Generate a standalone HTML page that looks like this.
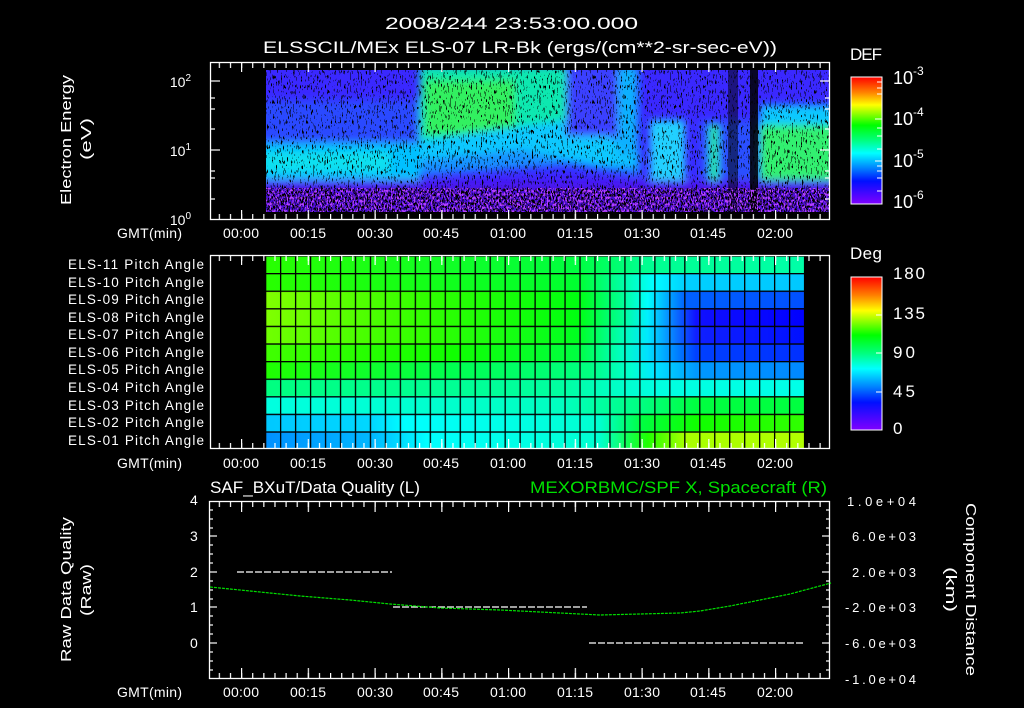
<!DOCTYPE html>
<html><head><meta charset="utf-8"><style>
html,body{margin:0;padding:0;background:#000;}
svg{display:block;}
text{font-family:"Liberation Sans",sans-serif;fill:#fff;}
</style></head><body>
<svg width="1024" height="708" viewBox="0 0 1024 708" xmlns="http://www.w3.org/2000/svg">
<defs>
<linearGradient id="cb1" x1="0" y1="0" x2="0" y2="1">
<stop offset="0" stop-color="#ff0000"/><stop offset="0.12" stop-color="#ff8000"/><stop offset="0.22" stop-color="#ffff00"/><stop offset="0.38" stop-color="#00ff00"/><stop offset="0.5" stop-color="#00ff80"/><stop offset="0.6" stop-color="#00ffff"/><stop offset="0.72" stop-color="#0080ff"/><stop offset="0.82" stop-color="#0010ff"/><stop offset="1" stop-color="#8000ff"/>
</linearGradient>
<filter id="bl" filterUnits="userSpaceOnUse" x="200" y="50" width="650" height="180"><feGaussianBlur stdDeviation="4"/></filter>
<filter id="sp" x="0" y="0" width="100%" height="100%"><feTurbulence type="fractalNoise" baseFrequency="0.8 0.2" numOctaves="2" seed="3"/><feColorMatrix type="matrix" values="0 0 0 0 0  0 0 0 0 0  0 0 0 0 0  -20 0 0 0 7.4"/></filter>
<filter id="sp2" x="0" y="0" width="100%" height="100%"><feTurbulence type="fractalNoise" baseFrequency="0.7 0.35" numOctaves="2" seed="7"/><feColorMatrix type="matrix" values="0 0 0 0 0  0 0 0 0 0  0 0 0 0 0  -20 0 0 0 10"/></filter>
<filter id="sp3" x="0" y="0" width="100%" height="100%"><feTurbulence type="fractalNoise" baseFrequency="0.7 0.3" numOctaves="2" seed="11"/><feColorMatrix type="matrix" values="0 0 0 0 0.45  0 0 0 0 0.05  0 0 0 0 1  20 0 0 0 -11"/></filter>
<pattern id="tkm" x="241" y="0" width="11.125" height="708" patternUnits="userSpaceOnUse"><rect x="0" y="0" width="1.2" height="708" fill="#fff"/></pattern>
<pattern id="tkM" x="241" y="0" width="66.75" height="708" patternUnits="userSpaceOnUse"><rect x="0" y="0" width="1.2" height="708" fill="#fff"/></pattern>
<pattern id="gv" x="265" y="0" width="14.97" height="708" patternUnits="userSpaceOnUse"><rect x="0" y="0" width="1.3" height="708" fill="#000"/></pattern>
<pattern id="gh" x="0" y="255.4" width="1024" height="17.6" patternUnits="userSpaceOnUse"><rect x="0" y="0" width="1024" height="1.3" fill="#000"/></pattern>
<clipPath id="c1"><rect x="266" y="70" width="563" height="142"/></clipPath>
</defs>

<text x="385" y="29" font-size="17" textLength="253" lengthAdjust="spacingAndGlyphs">2008/244 23:53:00.000</text>
<text x="263" y="53" font-size="17" textLength="514" lengthAdjust="spacingAndGlyphs">ELSSCIL/MEx ELS-07 LR-Bk  (ergs/(cm**2-sr-sec-eV))</text>

<g clip-path="url(#c1)">
<rect x="266" y="70" width="563" height="142" fill="#3a28ff"/>
<g filter="url(#bl)">
<rect x="260" y="100" width="160" height="45" fill="#2a48ff"/>
<rect x="260" y="143" width="160" height="37" fill="#00c0ff"/>
<rect x="260" y="152" width="130" height="20" fill="#10e0f0"/>
<rect x="420" y="66" width="148" height="90" fill="#10e8b0"/>
<rect x="425" y="80" width="90" height="55" fill="#30f060"/>
<polygon points="420,150 566,135 640,150 640,175 566,165 420,175" fill="#1890ff"/>
<polygon points="420,140 566,120 620,140 640,165 600,165 520,150 420,160" fill="#10c8ff"/>
<rect x="566" y="66" width="60" height="70" fill="#3a40ff"/>
<rect x="618" y="66" width="20" height="90" fill="#10b0ff"/>
<rect x="650" y="120" width="35" height="62" fill="#20d0ff"/>
<rect x="700" y="120" width="60" height="62" fill="#2a50ff"/>
<rect x="710" y="125" width="8" height="55" fill="#20f090"/>
<rect x="760" y="105" width="75" height="25" fill="#10c8ff"/>
<rect x="760" y="125" width="75" height="60" fill="#30f070"/>
<rect x="260" y="180" width="580" height="12" fill="#4a18f0"/>
<rect x="260" y="190" width="580" height="30" fill="#4a10d8"/>
</g>
<rect x="728" y="70" width="10" height="142" fill="#000" opacity="0.5"/>
<rect x="750" y="70" width="8" height="142" fill="#000" opacity="0.85"/>
<rect x="266" y="70" width="563" height="142" filter="url(#sp)"/>
<rect x="266" y="188" width="563" height="24" filter="url(#sp2)"/>
<rect x="266" y="188" width="563" height="24" filter="url(#sp3)"/>
</g>
<rect x="210.5" y="62.5" width="619" height="157" fill="none" stroke="#fff" stroke-width="1.3"/>
<rect x="210" y="63" width="620" height="5" fill="url(#tkm)"/>
<rect x="210" y="63" width="620" height="9" fill="url(#tkM)"/>
<rect x="210" y="214" width="620" height="5" fill="url(#tkm)"/>
<rect x="210" y="210" width="620" height="9" fill="url(#tkM)"/>
<g stroke="#fff" stroke-width="1.2">
<line x1="210" y1="81" x2="220" y2="81"/><line x1="210" y1="150" x2="220" y2="150"/>
<line x1="210" y1="98" x2="215" y2="98"/><line x1="210" y1="109" x2="215" y2="109"/><line x1="210" y1="129" x2="215" y2="129"/><line x1="210" y1="171" x2="215" y2="171"/><line x1="210" y1="178" x2="215" y2="178"/><line x1="210" y1="199" x2="215" y2="199"/>
<line x1="820" y1="81" x2="830" y2="81"/><line x1="820" y1="150" x2="830" y2="150"/>
<line x1="825" y1="98" x2="830" y2="98"/><line x1="825" y1="109" x2="830" y2="109"/><line x1="825" y1="129" x2="830" y2="129"/><line x1="825" y1="171" x2="830" y2="171"/><line x1="825" y1="178" x2="830" y2="178"/><line x1="825" y1="199" x2="830" y2="199"/>
</g>
<text x="191" y="87" font-size="14" text-anchor="end">10<tspan font-size="10" dy="-6">2</tspan></text>
<text x="191" y="156" font-size="14" text-anchor="end">10<tspan font-size="10" dy="-6">1</tspan></text>
<text x="191" y="225" font-size="14" text-anchor="end">10<tspan font-size="10" dy="-6">0</tspan></text>
<text transform="translate(71,205) rotate(-90)" font-size="15" textLength="130" lengthAdjust="spacingAndGlyphs">Electron Energy</text>
<text transform="translate(91,160) rotate(-90)" font-size="15" textLength="42" lengthAdjust="spacingAndGlyphs">(eV)</text>

<g font-size="14">
<text x="223" y="238" textLength="36">00:00</text><text x="290" y="238" textLength="36">00:15</text><text x="357" y="238" textLength="36">00:30</text><text x="423" y="238" textLength="36">00:45</text><text x="490" y="238" textLength="36">01:00</text><text x="557" y="238" textLength="36">01:15</text><text x="624" y="238" textLength="36">01:30</text><text x="690" y="238" textLength="36">01:45</text><text x="757" y="238" textLength="36">02:00</text>
<text x="223" y="468" textLength="36">00:00</text><text x="290" y="468" textLength="36">00:15</text><text x="357" y="468" textLength="36">00:30</text><text x="423" y="468" textLength="36">00:45</text><text x="490" y="468" textLength="36">01:00</text><text x="557" y="468" textLength="36">01:15</text><text x="624" y="468" textLength="36">01:30</text><text x="690" y="468" textLength="36">01:45</text><text x="757" y="468" textLength="36">02:00</text>
<text x="223" y="697" textLength="36">00:00</text><text x="290" y="697" textLength="36">00:15</text><text x="357" y="697" textLength="36">00:30</text><text x="423" y="697" textLength="36">00:45</text><text x="490" y="697" textLength="36">01:00</text><text x="557" y="697" textLength="36">01:15</text><text x="624" y="697" textLength="36">01:30</text><text x="690" y="697" textLength="36">01:45</text><text x="757" y="697" textLength="36">02:00</text>
<text x="117" y="238" textLength="65">GMT(min)</text><text x="117" y="468" textLength="65">GMT(min)</text><text x="117" y="697" textLength="65">GMT(min)</text>
</g>

<text x="850" y="60" font-size="17" textLength="32">DEF</text>
<rect x="851" y="77" width="31" height="127" fill="url(#cb1)" stroke="#fff" stroke-width="1"/>
<g stroke="#fff" stroke-width="1"><line x1="877" y1="82" x2="882" y2="82"/><line x1="877" y1="88" x2="882" y2="88"/><line x1="877" y1="94" x2="882" y2="94"/><line x1="875" y1="119" x2="882" y2="119"/><line x1="877" y1="128" x2="882" y2="128"/><line x1="877" y1="136" x2="882" y2="136"/><line x1="877" y1="149" x2="882" y2="149"/><line x1="875" y1="161" x2="882" y2="161"/><line x1="877" y1="166" x2="882" y2="166"/><line x1="877" y1="171" x2="882" y2="171"/><line x1="877" y1="178" x2="882" y2="178"/><line x1="877" y1="191" x2="882" y2="191"/></g>
<g font-size="18"><text x="893" y="84">10<tspan font-size="12" dy="-9">-3</tspan></text><text x="893" y="125">10<tspan font-size="12" dy="-9">-4</tspan></text><text x="893" y="167">10<tspan font-size="12" dy="-9">-5</tspan></text><text x="893" y="208">10<tspan font-size="12" dy="-9">-6</tspan></text></g>

<g>
<linearGradient id="r1"><stop offset="0" stop-color="#28ff00"/><stop offset="0.58" stop-color="#00ff40"/><stop offset="0.7" stop-color="#00ff90"/><stop offset="1" stop-color="#00ffa8"/></linearGradient>
<linearGradient id="r2"><stop offset="0" stop-color="#28ff00"/><stop offset="0.58" stop-color="#00ff30"/><stop offset="0.66" stop-color="#00ffa0"/><stop offset="0.72" stop-color="#00ffff"/><stop offset="0.78" stop-color="#00d0ff"/><stop offset="1" stop-color="#00c8ff"/></linearGradient>
<linearGradient id="r3"><stop offset="0" stop-color="#80ff00"/><stop offset="0.3" stop-color="#30ff00"/><stop offset="0.58" stop-color="#00ff10"/><stop offset="0.66" stop-color="#00ff90"/><stop offset="0.71" stop-color="#00ffff"/><stop offset="0.78" stop-color="#0060ff"/><stop offset="1" stop-color="#0050ff"/></linearGradient>
<linearGradient id="r4"><stop offset="0" stop-color="#80ff00"/><stop offset="0.3" stop-color="#30ff00"/><stop offset="0.58" stop-color="#00ff10"/><stop offset="0.66" stop-color="#00ff90"/><stop offset="0.71" stop-color="#00f0ff"/><stop offset="0.8" stop-color="#1010ff"/><stop offset="1" stop-color="#0000ff"/></linearGradient>
<linearGradient id="r5"><stop offset="0" stop-color="#70ff00"/><stop offset="0.3" stop-color="#30ff00"/><stop offset="0.58" stop-color="#00ff20"/><stop offset="0.66" stop-color="#00ffb0"/><stop offset="0.71" stop-color="#00e8ff"/><stop offset="0.8" stop-color="#1020ff"/><stop offset="1" stop-color="#0010ff"/></linearGradient>
<linearGradient id="r6"><stop offset="0" stop-color="#40ff00"/><stop offset="0.35" stop-color="#10ff00"/><stop offset="0.58" stop-color="#00ff40"/><stop offset="0.66" stop-color="#00ffc0"/><stop offset="0.71" stop-color="#00e0ff"/><stop offset="0.8" stop-color="#0040ff"/><stop offset="1" stop-color="#0030ff"/></linearGradient>
<linearGradient id="r7"><stop offset="0" stop-color="#20ff00"/><stop offset="0.35" stop-color="#00ff50"/><stop offset="0.6" stop-color="#00ff80"/><stop offset="0.68" stop-color="#00ffd0"/><stop offset="0.72" stop-color="#00e8ff"/><stop offset="0.8" stop-color="#0098ff"/><stop offset="1" stop-color="#0088ff"/></linearGradient>
<linearGradient id="r8"><stop offset="0" stop-color="#00ff80"/><stop offset="0.55" stop-color="#00ffa0"/><stop offset="0.72" stop-color="#00ffe0"/><stop offset="1" stop-color="#00ffe8"/></linearGradient>
<linearGradient id="r9"><stop offset="0" stop-color="#00ffe0"/><stop offset="0.55" stop-color="#00ffc0"/><stop offset="0.7" stop-color="#00ff80"/><stop offset="0.8" stop-color="#00ff40"/><stop offset="1" stop-color="#00ff40"/></linearGradient>
<linearGradient id="r10"><stop offset="0" stop-color="#00c8ff"/><stop offset="0.2" stop-color="#00d8ff"/><stop offset="0.26" stop-color="#00ffff"/><stop offset="0.62" stop-color="#00ffd0"/><stop offset="0.7" stop-color="#00ff40"/><stop offset="0.8" stop-color="#10ff00"/><stop offset="1" stop-color="#30ff00"/></linearGradient>
<linearGradient id="r11"><stop offset="0" stop-color="#0090ff"/><stop offset="0.2" stop-color="#00b8ff"/><stop offset="0.3" stop-color="#00ffff"/><stop offset="0.62" stop-color="#00ffd0"/><stop offset="0.71" stop-color="#20ff00"/><stop offset="0.78" stop-color="#a8ff00"/><stop offset="1" stop-color="#b0ff00"/></linearGradient>
<rect x="265" y="255.4" width="539" height="17.6" fill="url(#r1)"/>
<rect x="265" y="273" width="539" height="17.6" fill="url(#r2)"/>
<rect x="265" y="290.6" width="539" height="17.6" fill="url(#r3)"/>
<rect x="265" y="308.2" width="539" height="17.6" fill="url(#r4)"/>
<rect x="265" y="325.8" width="539" height="17.6" fill="url(#r5)"/>
<rect x="265" y="343.4" width="539" height="17.6" fill="url(#r6)"/>
<rect x="265" y="361" width="539" height="17.6" fill="url(#r7)"/>
<rect x="265" y="378.6" width="539" height="17.6" fill="url(#r8)"/>
<rect x="265" y="396.2" width="539" height="17.6" fill="url(#r9)"/>
<rect x="265" y="413.8" width="539" height="17.6" fill="url(#r10)"/>
<rect x="265" y="431.4" width="539" height="17.6" fill="url(#r11)"/>
<rect x="265" y="255" width="540" height="194" fill="url(#gv)"/>
<rect x="265" y="255" width="540" height="194" fill="url(#gh)"/>
</g>
<rect x="210.5" y="255.5" width="619" height="193" fill="none" stroke="#fff" stroke-width="1.3"/>
<rect x="210" y="256" width="620" height="5" fill="url(#tkm)"/>
<rect x="210" y="256" width="620" height="9" fill="url(#tkM)"/>
<rect x="210" y="443" width="620" height="5" fill="url(#tkm)"/>
<rect x="210" y="439" width="620" height="9" fill="url(#tkM)"/>
<g font-size="13.5">
<text x="68" y="269" textLength="136">ELS-11 Pitch Angle</text><text x="68" y="287" textLength="136">ELS-10 Pitch Angle</text><text x="68" y="304" textLength="136">ELS-09 Pitch Angle</text><text x="68" y="322" textLength="136">ELS-08 Pitch Angle</text><text x="68" y="339" textLength="136">ELS-07 Pitch Angle</text><text x="68" y="357" textLength="136">ELS-06 Pitch Angle</text><text x="68" y="374" textLength="136">ELS-05 Pitch Angle</text><text x="68" y="392" textLength="136">ELS-04 Pitch Angle</text><text x="68" y="410" textLength="136">ELS-03 Pitch Angle</text><text x="68" y="427" textLength="136">ELS-02 Pitch Angle</text><text x="68" y="445" textLength="136">ELS-01 Pitch Angle</text>
</g>
<text x="850" y="259" font-size="17" textLength="32">Deg</text>
<rect x="851" y="277" width="31" height="153" fill="url(#cb1)" stroke="#fff" stroke-width="1"/>
<g stroke="#fff" stroke-width="1"><line x1="876" y1="315" x2="882" y2="315"/><line x1="876" y1="353" x2="882" y2="353"/><line x1="876" y1="392" x2="882" y2="392"/></g>
<g font-size="17"><text x="893" y="279" textLength="32">180</text><text x="893" y="319" textLength="32">135</text><text x="893" y="358" textLength="22">90</text><text x="893" y="397" textLength="22">45</text><text x="893" y="434">0</text></g>

<text x="210" y="493" font-size="17" textLength="210" lengthAdjust="spacingAndGlyphs">SAF_BXuT/Data Quality (L)</text>
<text x="530" y="493" font-size="17" textLength="297" lengthAdjust="spacingAndGlyphs" style="fill:#00e000">MEXORBMC/SPF X, Spacecraft (R)</text>
<rect x="209.5" y="501.5" width="620" height="177" fill="none" stroke="#fff" stroke-width="1.3"/>
<rect x="210" y="502" width="620" height="5" fill="url(#tkm)"/>
<rect x="210" y="502" width="620" height="10" fill="url(#tkM)"/>
<rect x="210" y="673" width="620" height="5" fill="url(#tkm)"/>
<rect x="210" y="668" width="620" height="10" fill="url(#tkM)"/>
<g stroke="#fff" stroke-width="1.2">
<line x1="209" y1="536" x2="217" y2="536"/><line x1="209" y1="572" x2="217" y2="572"/><line x1="209" y1="607" x2="217" y2="607"/><line x1="209" y1="643" x2="217" y2="643"/>
<line x1="209" y1="510" x2="213" y2="510"/><line x1="209" y1="519" x2="213" y2="519"/><line x1="209" y1="528" x2="213" y2="528"/><line x1="209" y1="545" x2="213" y2="545"/><line x1="209" y1="554" x2="213" y2="554"/><line x1="209" y1="563" x2="213" y2="563"/><line x1="209" y1="581" x2="213" y2="581"/><line x1="209" y1="590" x2="213" y2="590"/><line x1="209" y1="599" x2="213" y2="599"/><line x1="209" y1="616" x2="213" y2="616"/><line x1="209" y1="625" x2="213" y2="625"/><line x1="209" y1="634" x2="213" y2="634"/><line x1="209" y1="652" x2="213" y2="652"/><line x1="209" y1="661" x2="213" y2="661"/><line x1="209" y1="670" x2="213" y2="670"/>
<line x1="822" y1="536" x2="830" y2="536"/><line x1="822" y1="572" x2="830" y2="572"/><line x1="822" y1="607" x2="830" y2="607"/><line x1="822" y1="643" x2="830" y2="643"/>
<line x1="826" y1="510" x2="830" y2="510"/><line x1="826" y1="519" x2="830" y2="519"/><line x1="826" y1="528" x2="830" y2="528"/><line x1="826" y1="545" x2="830" y2="545"/><line x1="826" y1="554" x2="830" y2="554"/><line x1="826" y1="563" x2="830" y2="563"/><line x1="826" y1="581" x2="830" y2="581"/><line x1="826" y1="590" x2="830" y2="590"/><line x1="826" y1="599" x2="830" y2="599"/><line x1="826" y1="616" x2="830" y2="616"/><line x1="826" y1="625" x2="830" y2="625"/><line x1="826" y1="634" x2="830" y2="634"/><line x1="826" y1="652" x2="830" y2="652"/><line x1="826" y1="661" x2="830" y2="661"/><line x1="826" y1="670" x2="830" y2="670"/>
</g>
<g stroke="#fff" stroke-width="1.2" stroke-dasharray="7,2">
<line x1="237" y1="572" x2="392" y2="572"/><line x1="393" y1="607" x2="587" y2="607"/><line x1="589" y1="643" x2="804" y2="643"/>
</g>
<path d="M210,587 L250,591 L300,596 L350,600 L390,604 L440,608 L500,610 L560,613 L600,615 L640,614 L680,613 L700,611 L730,606 L760,600 L790,594 L831,583" fill="none" stroke="#00e000" stroke-width="1.2" stroke-dasharray="3,1"/>
<g font-size="14"><text x="190" y="505">4</text><text x="190" y="541">3</text><text x="190" y="577">2</text><text x="190" y="612">1</text><text x="190" y="648">0</text></g>
<text transform="translate(71,662) rotate(-90)" font-size="15" textLength="145" lengthAdjust="spacingAndGlyphs">Raw Data Quality</text>
<text transform="translate(91,616) rotate(-90)" font-size="15" textLength="52" lengthAdjust="spacingAndGlyphs">(Raw)</text>
<g font-size="13"><text x="847" y="506" textLength="69">1.0e+04</text><text x="852" y="541" textLength="64">6.0e+03</text><text x="852" y="577" textLength="64">2.0e+03</text><text x="845" y="612" textLength="71">-2.0e+03</text><text x="845" y="648" textLength="71">-6.0e+03</text><text x="845" y="684" textLength="71">-1.0e+04</text></g>
<text transform="translate(966,503) rotate(90)" font-size="15" textLength="173" lengthAdjust="spacingAndGlyphs">Component Distance</text>
<text transform="translate(946,567) rotate(90)" font-size="15" textLength="45" lengthAdjust="spacingAndGlyphs">(km)</text>
</svg>
</body></html>
